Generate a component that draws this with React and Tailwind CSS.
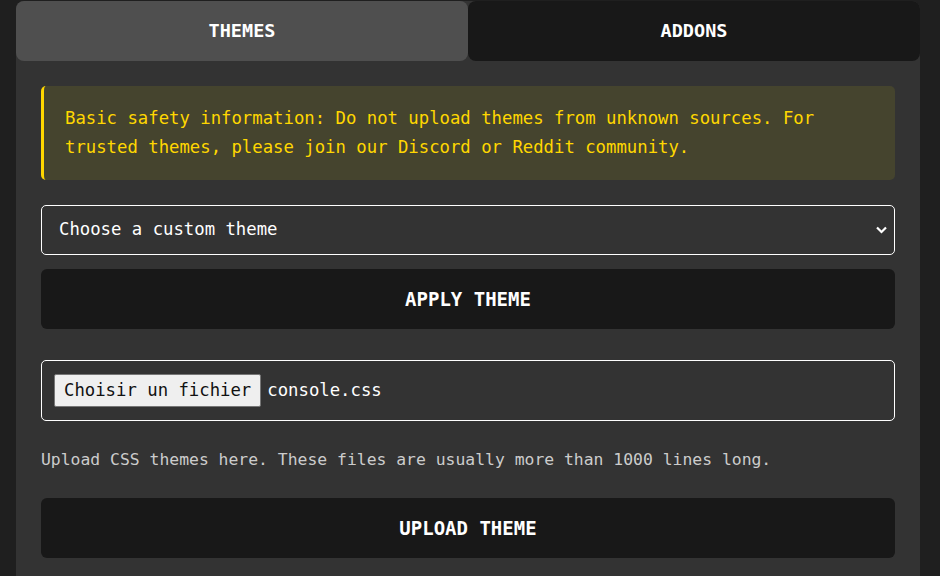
import React, { useState } from 'react';

const mono = { fontFamily: '"DejaVu Sans Mono", "Liberation Mono", monospace' };

const Tab = ({ label, active, onClick }) => (
  <button
    onClick={onClick}
    className={`flex-1 h-[60px] rounded-lg font-bold text-[18.5px] text-white tracking-normal ${active ? 'bg-[#4f4f4f]' : 'bg-[#181818]'}`}
  >
    {label}
  </button>
);

const BigButton = ({ children }) => (
  <button className="w-full h-[60px] rounded-md bg-[#181818] text-white font-bold text-[19px]">
    {children}
  </button>
);

export default function App() {
  const [tab, setTab] = useState('THEMES');

  return (
    <div className="min-h-[576px] w-[940px] bg-[#1f1f1f] pl-4 pt-px" style={mono}>
      <div className="w-[904px] min-h-[575px] bg-[#333333] rounded-t-lg">
        <div className="flex">
          <Tab label="THEMES" active={tab === 'THEMES'} onClick={() => setTab('THEMES')} />
          <Tab label="ADDONS" active={tab === 'ADDONS'} onClick={() => setTab('ADDONS')} />
        </div>

        <div className="px-[25px] pt-[25px] flex flex-col">
          {/* warning */}
          <div className="rounded-[5px] border-l-[3px] border-[#ffd700] bg-[#45442e] pl-[21px] pr-4 pt-[18px] pb-[18px] text-[#ffd700] text-[17.3px] leading-[29px]">
            Basic safety information: Do not upload themes from unknown sources. For trusted themes, please join our Discord or Reddit community.
          </div>

          {/* select */}
          <div className="relative mt-[25px]">
            <select className="appearance-none block w-full h-[50px] rounded-[5px] border border-white bg-[#333333] text-white pl-[17px] text-[17.3px] outline-none">
              <option>Choose a custom theme</option>
            </select>
            <svg className="absolute right-[8px] top-[21px] pointer-events-none" width="11" height="8" viewBox="0 0 11 8">
              <path d="M1 1.5 L5.5 6 L10 1.5" stroke="white" strokeWidth="2.2" fill="none" />
            </svg>
          </div>

          <div className="mt-[14px]">
            <BigButton>APPLY THEME</BigButton>
          </div>

          {/* file input */}
          <div className="mt-[31px] h-[61px] rounded-[5px] border border-white flex items-center pl-[12px] gap-[6px] text-[17.3px]">
            <span className="h-[33px] px-[9px] flex items-center bg-[#efefef] border border-[#767676] rounded-[2px] text-[#111]">
              Choisir un fichier
            </span>
            <span className="text-white">console.css</span>
          </div>

          <p className="mt-[28px] text-[16.4px] leading-[22px] text-[#cccccc]">
            Upload CSS themes here. These files are usually more than 1000 lines long.
          </p>

          <div className="mt-[27px]">
            <BigButton>UPLOAD THEME</BigButton>
          </div>
        </div>
      </div>
    </div>
  );
}
